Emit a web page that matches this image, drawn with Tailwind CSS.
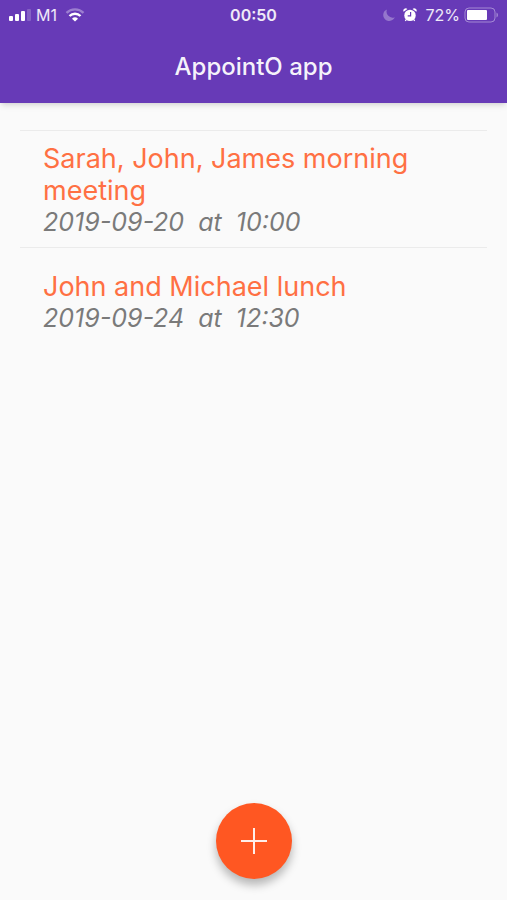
<!DOCTYPE html>
<html lang="en">
<head>
    <meta charset="UTF-8" />
    <meta name="viewport" content="width=device-width, initial-scale=1" />
    <title>AppointO app</title>
    <script src="https://cdn.jsdelivr.net/npm/@tailwindcss/browser@4"></script>
</head>
<body class="bg-[#fafafa] font-['Inter',sans-serif] min-h-screen flex flex-col">
    <header class="bg-[#673ab7] text-white shadow-md">
        <!-- Status bar -->
        <div class="grid grid-cols-3 items-center h-[30px] px-2 text-base text-white/90">
            <div class="flex items-center gap-1">
                <svg class="w-[23px] h-3 mr-px" viewBox="0 0 23 12" fill="white" aria-hidden="true">
                    <rect x="1" y="7" width="4" height="5" rx="1" />
                    <rect x="7" y="5" width="4" height="7" rx="1" />
                    <rect x="13" y="2" width="4" height="10" rx="1" />
                    <rect x="19" y="0" width="4" height="12" rx="1" opacity="0.2" />
                </svg>
                <span>M1</span>
                <svg class="w-5 h-[14px] ml-1" viewBox="0 0 20 14" fill="none" stroke="white" stroke-width="2.4" aria-hidden="true">
                    <path d="M1.5 4.8a12.2 12.2 0 0 1 17 0" opacity="0.35" />
                    <path d="M4.5 8a7.8 7.8 0 0 1 11 0" />
                    <path d="M10 13.5 7 10.7a4.3 4.3 0 0 1 6 0z" fill="white" stroke="none" />
                </svg>
            </div>
            <span class="text-center font-semibold">00:50</span>
            <div class="flex items-center justify-end">
                <svg class="w-3 h-3 mr-2 shrink-0" viewBox="0 0 12 12" fill="white" opacity="0.3" aria-hidden="true">
                    <path d="M4 .4A6 6 0 1 0 11.8 8.2 6 6 0 0 1 4 .4z" />
                </svg>
                <svg class="w-[14px] h-[14px] mr-2 shrink-0" viewBox="0 0 14 14" fill="white" aria-hidden="true">
                    <path d="M.6 3.8A2.4 2.4 0 0 1 4.4 1zM13.4 3.8A2.4 2.4 0 0 0 9.6 1z" />
                    <circle cx="7" cy="7.4" r="5.7" />
                    <path d="M3.2 11.5 2.4 13M10.8 11.5l.8 1.5" stroke="white" stroke-width="1.3" />
                    <path d="M7.6 4v3.9H4.7" fill="none" stroke="#673ab7" stroke-width="1.2" />
                </svg>
                <span class="mr-1">72%</span>
                <svg class="w-[35px] h-4 shrink-0" viewBox="0 0 35 16" fill="white" aria-hidden="true">
                    <rect x="1" y="1" width="30" height="14" rx="4" fill="none" stroke="white" opacity="0.4" />
                    <rect x="3" y="3" width="20" height="10" rx="1" />
                    <path d="M32.5 5.5a2.8 2.8 0 0 1 0 5z" opacity="0.4" />
                </svg>
            </div>
        </div>
        <h1 class="h-[73px] flex items-center justify-center text-2xl font-medium text-white/95">AppointO app</h1>
    </header>

    <main class="flex-1 px-5 pt-[27px]">
        <ul>
            <li class="border-y border-[#ebebeb] px-[23px] pt-3 pb-[10px]">
                <h2 class="text-[27px] leading-8 text-[#ff7043]">Sarah, John, James morning meeting</h2>
                <p class="text-[25px] leading-[30px] italic text-[#7a7a7a] whitespace-pre">2019-09-20  at  10:00</p>
            </li>
            <li class="min-h-[108px] px-[23px] flex flex-col justify-center">
                <h2 class="text-[27px] leading-8 text-[#ff7043]">John and Michael lunch</h2>
                <p class="text-[25px] leading-[30px] italic text-[#7a7a7a] whitespace-pre">2019-09-24  at  12:30</p>
            </li>
        </ul>
    </main>

    <footer class="flex justify-center pb-[21px]">
        <button type="button" aria-label="Add appointment" class="w-[76px] h-[76px] rounded-full bg-[#ff5722] text-white/90 flex items-center justify-center shadow-[0_6px_10px_rgba(0,0,0,0.28)]">
            <svg class="w-[26px] h-[26px]" viewBox="0 0 26 26" fill="none" stroke="currentColor" stroke-width="2" aria-hidden="true">
                <path d="M13 0v26M0 13h26" />
            </svg>
        </button>
    </footer>
</body>
</html>
